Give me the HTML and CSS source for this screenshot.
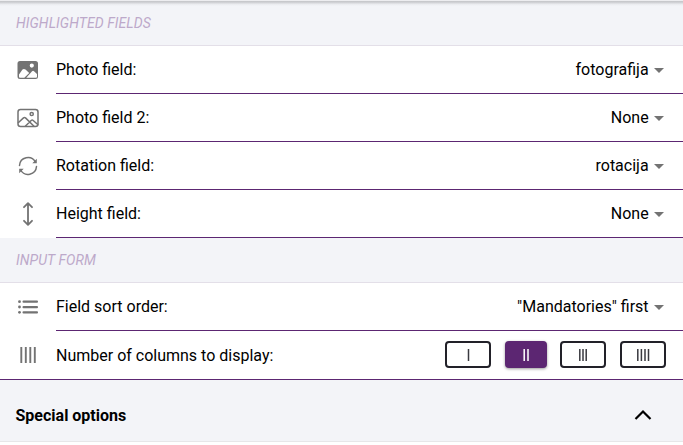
FILE: index.html
```html
<!DOCTYPE html>
<html lang="en">
<head>
<meta charset="utf-8">
<title>Fields</title>
<link rel="stylesheet" href="styles.css">
</head>
<body>
<main class="panel">
  <h2 class="divider divider-top">HIGHLIGHTED FIELDS</h2>
  <div class="item">
    <svg class="icon" viewBox="0 0 24 24"><path fill="currentColor" fill-rule="evenodd" d="M4 3h15.500a2.500 2.500 0 0 1 2.500 2.500v13a2.500 2.500 0 0 1-2.500 2.500H4a2.500 2.500 0 0 1-2.500-2.500v-13A2.500 2.500 0 0 1 4 3zM15.800 5.500a2 2 0 1 0 0 4.200 2 2 0 0 0 0-4.200zM3 16.500v2.200q0 1 1 1h4.300l4.900-4.800-3.700-3.400q-1.700-1.200-3 0zM10.300 19.700H20q1 0 1-1v-2.700l-3-2.800q-1-.7-1.900.1z"/></svg>
    <div class="body"><span>Photo field:</span><span class="value">fotografija<i class="caret"></i></span></div>
  </div>
  <div class="item">
    <svg class="icon" viewBox="0 0 24 24"><g class="line"><rect x="2" y="3.500" width="20" height="17" rx="2.500"/><circle cx="15.700" cy="8" r="1.600"/><path d="M2.500 16.500l5-4.600q1-.8 2 0l8.500 8.300M9.500 20l5.700-5.500q1-.8 2 0l4.500 4"/></g></svg>
    <div class="body"><span>Photo field 2:</span><span class="value">None<i class="caret"></i></span></div>
  </div>
  <div class="item">
    <svg class="icon" viewBox="0 0 24 24"><g class="line"><path d="M3.500 11.500a8.500 8.500 0 0 1 15.900-3.500M20.500 12.500a8.500 8.500 0 0 1-15.900 3.500"/></g><path fill="currentColor" d="M20.800 4.800v4.400h-4.500zM3.200 19.200v-4.400h4.500z"/></svg>
    <div class="body"><span>Rotation field:</span><span class="value">rotacija<i class="caret"></i></span></div>
  </div>
  <div class="item">
    <svg class="icon" viewBox="0 0 24 24"><path class="line arrow" d="M12 1.500v21M8 5.200l4-4 4 4M8 18.800l4 4 4-4"/></svg>
    <div class="body"><span>Height field:</span><span class="value">None<i class="caret"></i></span></div>
  </div>
  <h2 class="divider">INPUT FORM</h2>
  <div class="item">
    <svg class="icon" viewBox="0 0 24 24"><g fill="currentColor"><circle cx="3.500" cy="6.700" r="1.400"/><circle cx="3.500" cy="12" r="1.400"/><circle cx="3.500" cy="17.300" r="1.400"/><rect x="6.500" y="5.500" width="15.500" height="2.300" rx="1"/><rect x="6.500" y="10.900" width="15.500" height="2.300" rx="1"/><rect x="6.500" y="16.200" width="15.500" height="2.300" rx="1"/></g></svg>
    <div class="body"><span>Field sort order:</span><span class="value">"Mandatories" first<i class="caret"></i></span></div>
  </div>
  <div class="item item-columns">
    <svg class="icon" viewBox="0 0 24 24"><path class="columns" d="M5.300 4v16M9.800 4v16M14.300 4v16M18.800 4v16"/></svg>
    <div class="body"><span class="label">Number of columns to display:</span>
      <div class="choices">
        <button class="choice"><svg class="bars" viewBox="0 0 20 12"><path d="M10.500 0v12"/></svg></button>
        <button class="choice selected"><svg class="bars" viewBox="0 0 20 12"><path d="M8.200 0v12M12 0v12"/></svg></button>
        <button class="choice"><svg class="bars" viewBox="0 0 20 12"><path d="M6.800 0v12M10 0v12M13.200 0v12"/></svg></button>
        <button class="choice"><svg class="bars" viewBox="0 0 20 12"><path d="M4.800 0v12M8.400 0v12M12 0v12M15.500 0v12"/></svg></button>
      </div>
    </div>
  </div>
  <div class="special">
    <span class="label">Special options</span>
    <svg class="chevron" viewBox="0 0 18 12"><path d="M1.500 10L9 2.500l7.500 7.500"/></svg>
  </div>
</main>
</body>
</html>
```
FILE: styles.css
```css
* { box-sizing: border-box; }

body {
  margin: 0;
  background: #fff;
  color: #000;
  font: 16px/24px Roboto, sans-serif;
  overflow: hidden;
}

.divider {
  display: flex;
  align-items: center;
  height: 45px;
  margin: 0;
  padding: 0 16px;
  background: #f3f4f8;
  border-bottom: 1px solid #e3dfe8;
  color: #bda9ca;
  font-size: 14px;
  font-weight: 400;
  font-style: italic;
  letter-spacing: .08px;
}

.divider-top {
  height: 46px;
  background: linear-gradient(#ededf0 0, #ededf0 1px, #c3c4c7 1px, #d5d6da 3px, #e9eaee 4px, #f3f4f8 6px);
}

.item {
  display: flex;
  height: 48px;
  padding-left: 16px;
}

.icon {
  flex: none;
  width: 24px;
  height: 24px;
  margin: 12px 16px 0 0;
  color: #737373;
}

.line {
  fill: none;
  stroke: currentColor;
  stroke-width: 1.5;
  stroke-linecap: round;
  stroke-linejoin: round;
}

.arrow { stroke-width: 1.8; }

.columns {
  stroke: currentColor;
  stroke-width: 1.9;
}

.body {
  display: flex;
  flex: 1;
  align-items: center;
  justify-content: space-between;
  padding-right: 19px;
  border-bottom: 1px solid #5c2672;
}

.value {
  display: flex;
  align-items: center;
}

.caret {
  margin: 2px 0 0 5.4px;
  border: 5px solid transparent;
  border-top-color: #737373;
  border-bottom: 0;
}

.item-columns {
  height: 49px;
  border-bottom: 1px solid #5c2672;
}

.item-columns .body {
  border: 0;
  padding-right: 17px;
}

.label { padding-top: 2px; }

.choices {
  display: flex;
  gap: 14px;
  padding-bottom: 1px;
}

.choice {
  display: flex;
  align-items: center;
  justify-content: center;
  width: 46px;
  height: 27px;
  padding: 0;
  border: 2px solid #222129;
  border-radius: 4px;
  background: #fff;
  color: #3a3a40;
}

.bars {
  flex: none;
  width: 20px;
  height: 12px;
  stroke: currentColor;
  stroke-width: 1.5;
}

.choice.selected {
  width: 42px;
  margin-right: -1px;
  border-color: #5c2672;
  background: #5c2672;
  color: #fff;
  box-shadow: 0 1px 3px rgba(0, 0, 0, .4);
}

.special {
  display: flex;
  align-items: center;
  justify-content: space-between;
  height: 62px;
  padding: 9px 31px 0 15.500px;
  background: #f3f4f8;
  border-bottom: 1px solid #e7e7e9;
  font-weight: 700;
}

.chevron {
  width: 18px;
  height: 12px;
  fill: none;
  stroke: #000;
  stroke-width: 2.2;
}
```
